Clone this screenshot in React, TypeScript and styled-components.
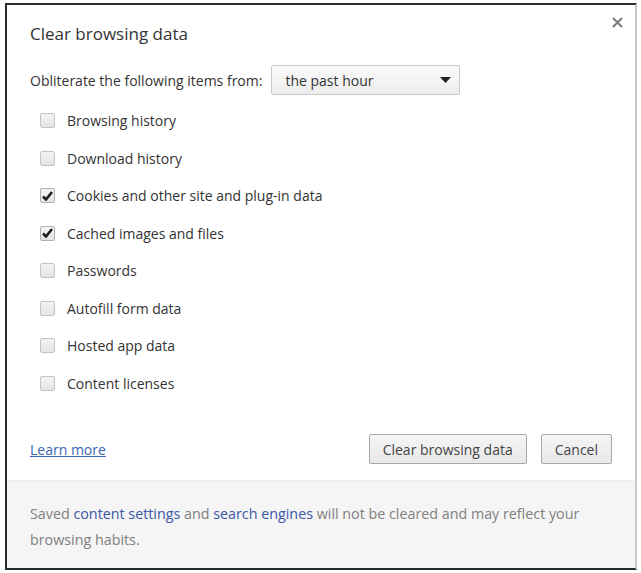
import React, { useState } from 'react';
import styled, { createGlobalStyle } from 'styled-components';

const GlobalStyle = createGlobalStyle`
  html, body {
    margin: 0;
    padding: 0;
    background: #ffffff;
  }
  body {
    font-family: 'Open Sans', 'Noto Sans', sans-serif;
    color: #333;
  }
`;

const Page = styled.div`
  width: 641px;
  height: 573px;
  padding: 3px 4px 3px 5px;
  box-sizing: border-box;
`;

const Dialog = styled.div`
  width: 100%;
  height: 100%;
  box-sizing: border-box;
  border: 2px solid #2b2b2b;
  border-right-color: #c8c8c8;
  display: flex;
  flex-direction: column;
  background: #fff;
  position: relative;
`;

const Body = styled.div`
  flex: 1;
  padding: 17px 23px 0 23px;
  display: flex;
  flex-direction: column;
`;

const Title = styled.h1`
  margin: 0;
  font-size: 17px;
  font-weight: 400;
  color: #333;
  line-height: 24px;
`;

const CloseButton = styled.button`
  position: absolute;
  top: 9px;
  right: 10px;
  border: none;
  background: none;
  padding: 0;
  width: 16px;
  height: 16px;
  display: flex;
  align-items: center;
  justify-content: center;
  cursor: pointer;
`;

const RangeRow = styled.div`
  display: flex;
  align-items: center;
  gap: 9px;
  margin-top: 19px;
  font-size: 14px;
  color: #333;
`;

const Select = styled.div`
  width: 189px;
  height: 30px;
  box-sizing: border-box;
  border: 1px solid #c8c8c8;
  border-radius: 2px;
  background: linear-gradient(#fafafa, #ededed);
  display: flex;
  align-items: center;
  justify-content: space-between;
  padding: 0 8px 0 13px;
  font-size: 14px;
  color: #333;
`;

const CheckList = styled.div`
  display: flex;
  flex-direction: column;
  margin-top: 7px;
  padding-left: 10px;
`;

const CheckRow = styled.label`
  display: flex;
  align-items: center;
  gap: 12px;
  height: 37.5px;
  font-size: 14px;
  color: #333;
  cursor: pointer;
`;

const Box = styled.span<{ checked: boolean }>`
  width: 15px;
  height: 15px;
  box-sizing: border-box;
  border: 1px solid ${p => (p.checked ? '#b0b0b0' : '#c4c4c4')};
  border-radius: 2px;
  background: linear-gradient(#f4f4f4, #e4e4e4);
  display: flex;
  align-items: center;
  justify-content: center;
`;

const Footer = styled.div`
  display: flex;
  align-items: center;
  justify-content: space-between;
  margin-top: auto;
  padding: 0 0 16px 0;
`;

const LearnMore = styled.a`
  font-size: 14px;
  color: #3a66b8;
  text-decoration: underline;
`;

const Buttons = styled.div`
  display: flex;
  gap: 14px;
`;

const Button = styled.button`
  height: 30px;
  box-sizing: border-box;
  padding: 0 13px;
  border: 1px solid #a9a9a9;
  border-radius: 2px;
  background: linear-gradient(#f6f6f6, #e8e8e8);
  font-family: inherit;
  font-size: 14px;
  color: #444;
  cursor: pointer;
`;

const Note = styled.div`
  background: #f5f5f5;
  border-top: 1px solid #eeeeee;
  height: 88px;
  box-sizing: border-box;
  padding: 20px 23px 0 23px;
  font-size: 14.3px;
  line-height: 26px;
  color: #808080;
`;

const NoteLink = styled.a`
  color: #3a57a8;
  text-decoration: none;
`;

const items = [
  { label: 'Browsing history', checked: false },
  { label: 'Download history', checked: false },
  { label: 'Cookies and other site and plug-in data', checked: true },
  { label: 'Cached images and files', checked: true },
  { label: 'Passwords', checked: false },
  { label: 'Autofill form data', checked: false },
  { label: 'Hosted app data', checked: false },
  { label: 'Content licenses', checked: false },
];

const CheckMark = () => (
  <svg width="11" height="10" viewBox="0 0 11 10">
    <path d="M1 5.5 L4 8.5 L10 1" fill="none" stroke="#1e1e1e" strokeWidth="2.6" strokeLinejoin="miter" />
  </svg>
);

const App: React.FC = () => {
  const [state, setState] = useState(items.map(i => i.checked));

  return (
    <>
      <GlobalStyle />
      <Page>
        <Dialog>
          <CloseButton aria-label="Close">
            <svg width="11" height="11" viewBox="0 0 11 11">
              <path d="M1 1 L10 10 M10 1 L1 10" stroke="#7a7a7a" strokeWidth="2" />
            </svg>
          </CloseButton>
          <Body>
            <Title>Clear browsing data</Title>
            <RangeRow>
              <span>Obliterate the following items from:</span>
              <Select>
                <span>the past hour</span>
                <svg width="11" height="6" viewBox="0 0 11 6">
                  <path d="M0 0 L11 0 L5.5 6 Z" fill="#222" />
                </svg>
              </Select>
            </RangeRow>
            <CheckList>
              {items.map((item, idx) => (
                <CheckRow
                  key={item.label}
                  onClick={() => setState(s => s.map((v, i) => (i === idx ? !v : v)))}
                >
                  <Box checked={state[idx]}>{state[idx] && <CheckMark />}</Box>
                  {item.label}
                </CheckRow>
              ))}
            </CheckList>
            <Footer>
              <LearnMore href="#">Learn more</LearnMore>
              <Buttons>
                <Button>Clear browsing data</Button>
                <Button>Cancel</Button>
              </Buttons>
            </Footer>
          </Body>
          <Note>
            Saved <NoteLink href="#">content settings</NoteLink> and{' '}
            <NoteLink href="#">search engines</NoteLink> will not be cleared and may reflect your
            browsing habits.
          </Note>
        </Dialog>
      </Page>
    </>
  );
};

export default App;
